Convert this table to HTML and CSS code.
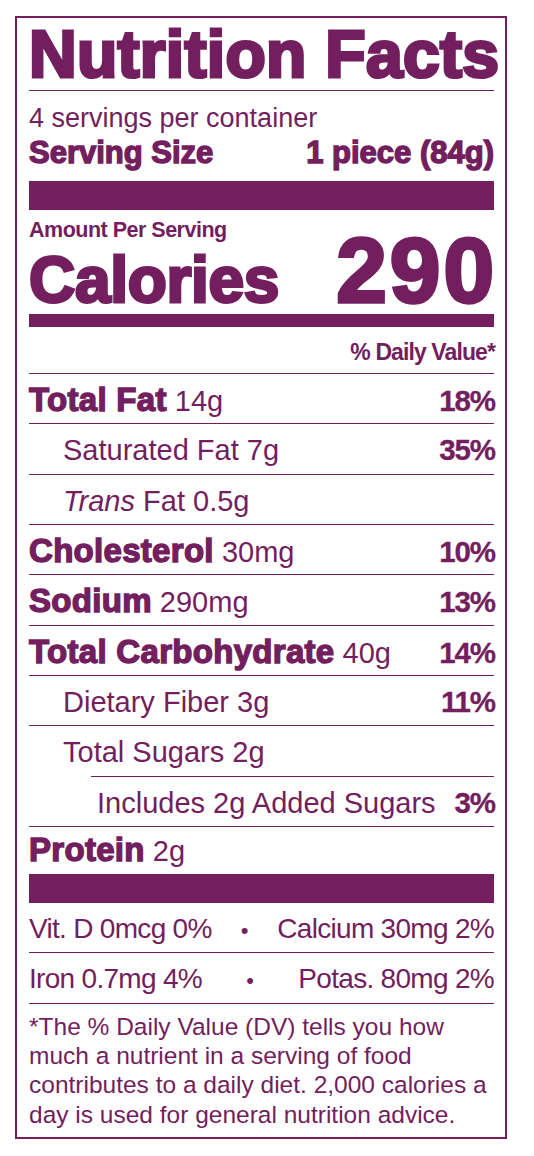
FILE: index.html
```html
<!DOCTYPE html>
<html lang="en">
<head>
<meta charset="utf-8">
<title>Nutrition Facts</title>
<link rel="stylesheet" href="styles.css">
</head>
<body>
<div class="label">
  <h1 class="title">Nutrition Facts</h1>
  <div class="servings">4 servings per container</div>
  <div class="size"><span class="heavy">Serving Size</span><span class="heavy">1 piece (84g)</span></div>
  <div class="bar bar-thick"></div>
  <div class="cal">
    <div class="cal-left">
      <div class="amount">Amount Per Serving</div>
      <div class="cal-word">Calories</div>
    </div>
    <div class="cal-num">290</div>
  </div>
  <div class="bar bar-med"></div>
  <div class="dvhead"><span>% Daily Value*</span></div>

  <div class="row"><span class="lab"><b class="nut">Total Fat</b> 14g</span><b class="dv">18%</b></div>
  <div class="row sub"><span class="lab">Saturated Fat 7g</span><b class="dv">35%</b></div>
  <div class="row sub"><span class="lab"><i>Trans</i> Fat 0.5g</span></div>
  <div class="row"><span class="lab"><b class="nut">Cholesterol</b> 30mg</span><b class="dv">10%</b></div>
  <div class="row"><span class="lab"><b class="nut">Sodium</b> 290mg</span><b class="dv">13%</b></div>
  <div class="row"><span class="lab"><b class="nut">Total Carbohydrate</b> 40g</span><b class="dv">14%</b></div>
  <div class="row sub"><span class="lab">Dietary Fiber 3g</span><b class="dv">11%</b></div>
  <div class="row sub noline"><span class="lab">Total Sugars 2g</span></div>
  <div class="subrule"></div>
  <div class="row sub2"><span class="lab">Includes 2g Added Sugars</span><b class="dv">3%</b></div>
  <div class="row protein noline"><span class="lab"><b class="nut">Protein</b> 2g</span></div>
  <div class="bar bar-thick bar-flush"></div>

  <div class="row mini"><span>Vit. D 0mcg 0%</span><span class="dot">&bull;</span><span>Calcium 30mg 2%</span></div>
  <div class="row mini"><span>Iron 0.7mg 4%</span><span class="dot">&bull;</span><span>Potas. 80mg 2%</span></div>

  <p class="foot">*The % Daily Value (DV) tells you how<br>much a nutrient in a serving of food<br>contributes to a daily diet. 2,000 calories a<br>day is used for general nutrition advice.</p>
</div>
</body>
</html>
```
FILE: styles.css
```css
html, body {
  margin: 0;
  padding: 0;
  background: #ffffff;
}

.label {
  margin: 16px 0 0 15px;
  width: 465px;
  padding: 3px 11px 8px 12px;
  border: 2px solid #731e5e;
  color: #731e5e;
  font-family: "Liberation Sans", Arial, sans-serif;
}

.heavy,
.title,
.cal-word,
.cal-num,
.nut {
  font-weight: 700;
  -webkit-text-stroke: 1.4px #731e5e;
}

.title {
  margin: 0;
  font-size: 66px;
  line-height: 66px;
  letter-spacing: 0.3px;
  -webkit-text-stroke: 3.2px #731e5e;
  padding-bottom: 3px;
  border-bottom: 1px solid #731e5e;
  white-space: nowrap;
}

.servings {
  margin-top: 10px;
  font-size: 27px;
  line-height: 34px;
}

.size {
  display: flex;
  justify-content: space-between;
  align-items: baseline;
  font-size: 31px;
  line-height: 36px;
}

.bar {
  background: #731e5e;
}

.bar-thick {
  margin-top: 10px;
  height: 29px;
}

.bar-flush {
  margin-top: 0;
}

.cal {
  display: flex;
  justify-content: space-between;
  align-items: flex-end;
}

.amount {
  margin-top: 8px;
  font-size: 21.5px;
  line-height: 24px;
  font-weight: 700;
  letter-spacing: -0.5px;
}

.cal-word {
  margin-top: 6px;
  font-size: 64px;
  line-height: 64px;
  letter-spacing: -0.3px;
  -webkit-text-stroke: 3px #731e5e;
}

.cal-num {
  font-size: 91px;
  line-height: 82px;
  letter-spacing: 3px;
  margin-right: -3px;
  -webkit-text-stroke: 3.4px #731e5e;
}

.bar-med {
  margin-top: 2px;
  height: 13px;
}

.dvhead {
  margin-top: 11px;
  padding-bottom: 7px;
  border-bottom: 1px solid #731e5e;
  text-align: right;
  font-size: 23px;
  line-height: 28px;
  font-weight: 700;
  letter-spacing: -0.9px;
}

.dvhead span {
  margin-right: -1px;
}

.row {
  display: flex;
  justify-content: space-between;
  align-items: baseline;
  height: 49.33px;
  border-bottom: 1px solid #731e5e;
  font-size: 29px;
  line-height: 52.5px;
  white-space: nowrap;
}

.row.noline {
  border-bottom: none;
}

.nut {
  font-size: 33px;
  letter-spacing: 0.3px;
}

.dv {
  font-size: 29.5px;
  font-weight: 700;
  letter-spacing: -1.1px;
  margin-right: -1px;
  -webkit-text-stroke: 0.3px #731e5e;
}

.sub {
  padding-left: 34px;
}

.sub2 {
  padding-left: 68px;
}

.subrule {
  margin-left: 62px;
  height: 1px;
  background: #731e5e;
}

.protein {
  height: 47px;
  line-height: 46.5px;
}

.mini {
  font-size: 28px;
  line-height: 52px;
  letter-spacing: -0.7px;
}

.mini .dot {
  font-size: 22px;
  letter-spacing: 0;
}

.foot {
  margin: 8px 0 0;
  font-size: 24.5px;
  line-height: 29.3px;
  white-space: nowrap;
}
```
